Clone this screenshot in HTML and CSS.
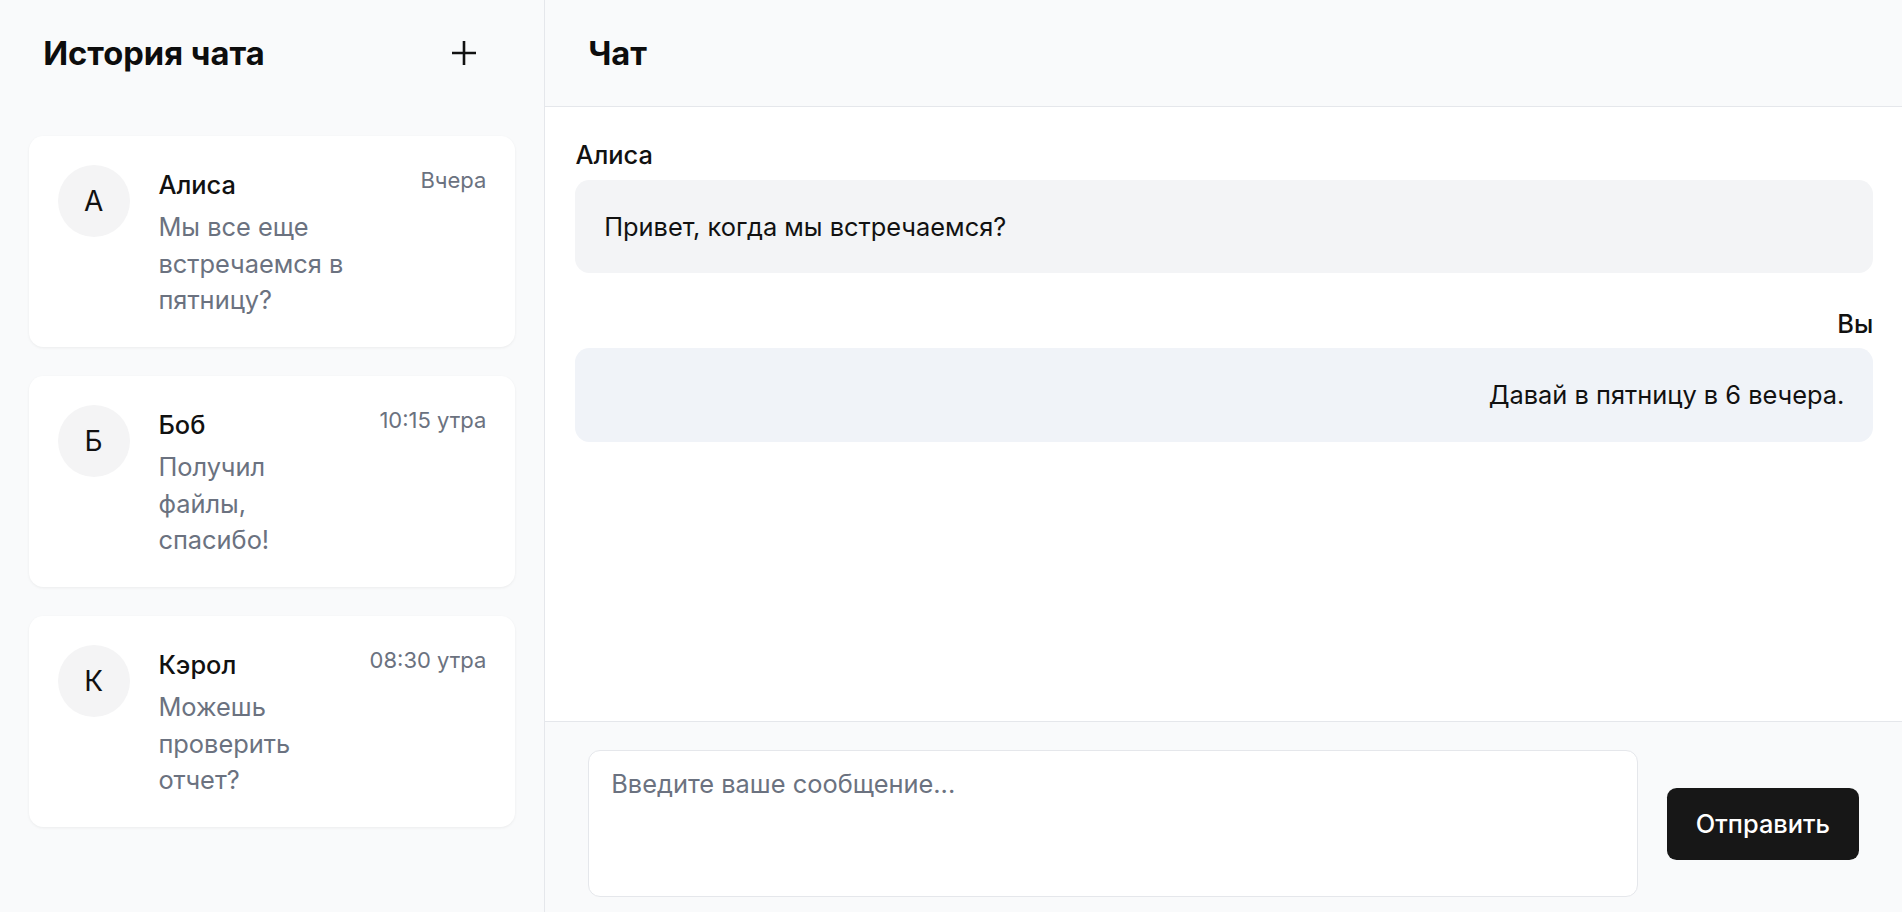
FILE: index.html
```html
<!DOCTYPE html>
<html lang="ru">
<head>
<meta charset="utf-8">
<title>Чат</title>
<link rel="stylesheet" href="styles.css">
</head>
<body>
<div class="app">
  <aside class="sidebar">
    <div class="sidebar-header">
      <h1 class="title">История чата</h1>
      <button class="icon-btn" aria-label="Новый чат">
        <svg width="26" height="26" viewBox="0 0 26 26" fill="none" stroke="#111" stroke-width="2.6">
          <path d="M13 1v24M1 13h24"/>
        </svg>
      </button>
    </div>
    <ul class="chat-list">
      <li class="chat-card">
        <div class="avatar">А</div>
        <div class="chat-info">
          <div class="chat-name">Алиса</div>
          <div class="chat-preview">Мы все еще встречаемся в пятницу?</div>
        </div>
        <div class="chat-time">Вчера</div>
      </li>
      <li class="chat-card">
        <div class="avatar">Б</div>
        <div class="chat-info">
          <div class="chat-name">Боб</div>
          <div class="chat-preview">Получил файлы, спасибо!</div>
        </div>
        <div class="chat-time">10:15 утра</div>
      </li>
      <li class="chat-card">
        <div class="avatar">К</div>
        <div class="chat-info">
          <div class="chat-name">Кэрол</div>
          <div class="chat-preview">Можешь проверить отчет?</div>
        </div>
        <div class="chat-time">08:30 утра</div>
      </li>
    </ul>
  </aside>
  <main class="chat">
    <header class="chat-header">
      <h2 class="title">Чат</h2>
    </header>
    <section class="messages">
      <div class="message">
        <div class="sender">Алиса</div>
        <div class="bubble">Привет, когда мы встречаемся?</div>
      </div>
      <div class="message mine">
        <div class="sender">Вы</div>
        <div class="bubble">Давай в пятницу в 6 вечера.</div>
      </div>
    </section>
    <footer class="composer">
      <textarea class="input" placeholder="Введите ваше сообщение..."></textarea>
      <button class="send">Отправить</button>
    </footer>
  </main>
</div>
</body>
</html>
```
FILE: styles.css
```css
* { box-sizing: border-box; }
html, body { margin: 0; padding: 0; overflow: hidden; }
body {
  font-family: Inter, "Noto Sans", sans-serif;
  color: #111;
  background: #fff;
}
.app {
  display: flex;
  height: 926px;
}
.sidebar {
  width: 545px;
  flex-shrink: 0;
  background: #f9fafb;
  border-right: 1px solid #e5e7eb;
  display: flex;
  flex-direction: column;
}
.sidebar-header {
  display: flex;
  align-items: center;
  justify-content: space-between;
  padding: 28.8px 67px 28.8px 43.2px;
}
.title {
  margin: 0;
  font-size: 32.7px;
  line-height: 48px;
  font-weight: 700;
  color: #0d0d0d;
}
.icon-btn {
  border: 0;
  background: none;
  padding: 0;
  width: 26px;
  height: 26px;
  display: flex;
  cursor: pointer;
}
.chat-list {
  list-style: none;
  margin: 0;
  padding: 30.4px 28.8px 0;
  display: flex;
  flex-direction: column;
  gap: 28.8px;
}
.chat-card {
  background: #fff;
  border-radius: 14.4px;
  box-shadow: 0 1px 3px rgba(0,0,0,0.06);
  padding: 28.8px;
  display: flex;
  align-items: flex-start;
  gap: 28.8px;
}
.avatar {
  width: 72px;
  height: 72px;
  border-radius: 50%;
  background: #f4f4f5;
  flex-shrink: 0;
  display: flex;
  align-items: center;
  justify-content: center;
  font-size: 28px;
  color: #111;
}
.chat-info {
  flex: 1;
  min-width: 0;
  margin-right: 24px;
}
.chat-name {
  font-size: 25.4px;
  line-height: 40.4px;
  font-weight: 500;
  color: #111;
}
.chat-preview {
  margin-top: 4px;
  font-size: 25.4px;
  line-height: 36.4px;
  color: #6b7280;
}
.chat-time {
  flex-shrink: 0;
  white-space: nowrap;
  font-size: 22px;
  line-height: 30px;
  color: #6b7280;
}
.chat {
  flex: 1;
  display: flex;
  flex-direction: column;
  min-width: 0;
}
.chat-header {
  background: #f9fafb;
  border-bottom: 1px solid #e5e7eb;
  padding: 28.8px 43.2px;
}
.messages {
  flex: 1;
  background: #fff;
  padding: 32.6px 28.8px 28.8px 30.4px;
  display: flex;
  flex-direction: column;
  gap: 34.2px;
}
.sender {
  font-size: 25.4px;
  line-height: 32.4px;
  font-weight: 500;
  margin-bottom: 8.2px;
}
.bubble {
  background: #f3f4f6;
  border-radius: 14.4px;
  padding: 28.8px;
  font-size: 25.4px;
  line-height: 36px;
  color: #111;
}
.mine .sender { text-align: right; }
.mine .bubble {
  background: #f0f3f8;
  text-align: right;
}
.composer {
  background: #f9fafb;
  border-top: 1px solid #e5e7eb;
  padding: 28.8px 43.2px;
  display: flex;
  align-items: center;
  gap: 28.8px;
}
.input {
  flex: 1;
  height: 146.8px;
  resize: none;
  border: 1px solid #e5e7eb;
  border-radius: 12px;
  background: #fff;
  padding: 14.4px 22px;
  font-family: inherit;
  font-size: 25.4px;
  line-height: 36px;
  color: #111;
  outline: none;
}
.input::placeholder { color: #6b7280; }
.send {
  flex-shrink: 0;
  background: #171717;
  color: #fff;
  border: 0;
  border-radius: 9.6px;
  padding: 17.8px 28.8px;
  font-family: inherit;
  font-size: 25.4px;
  line-height: 36px;
  font-weight: 500;
  cursor: pointer;
}
```
